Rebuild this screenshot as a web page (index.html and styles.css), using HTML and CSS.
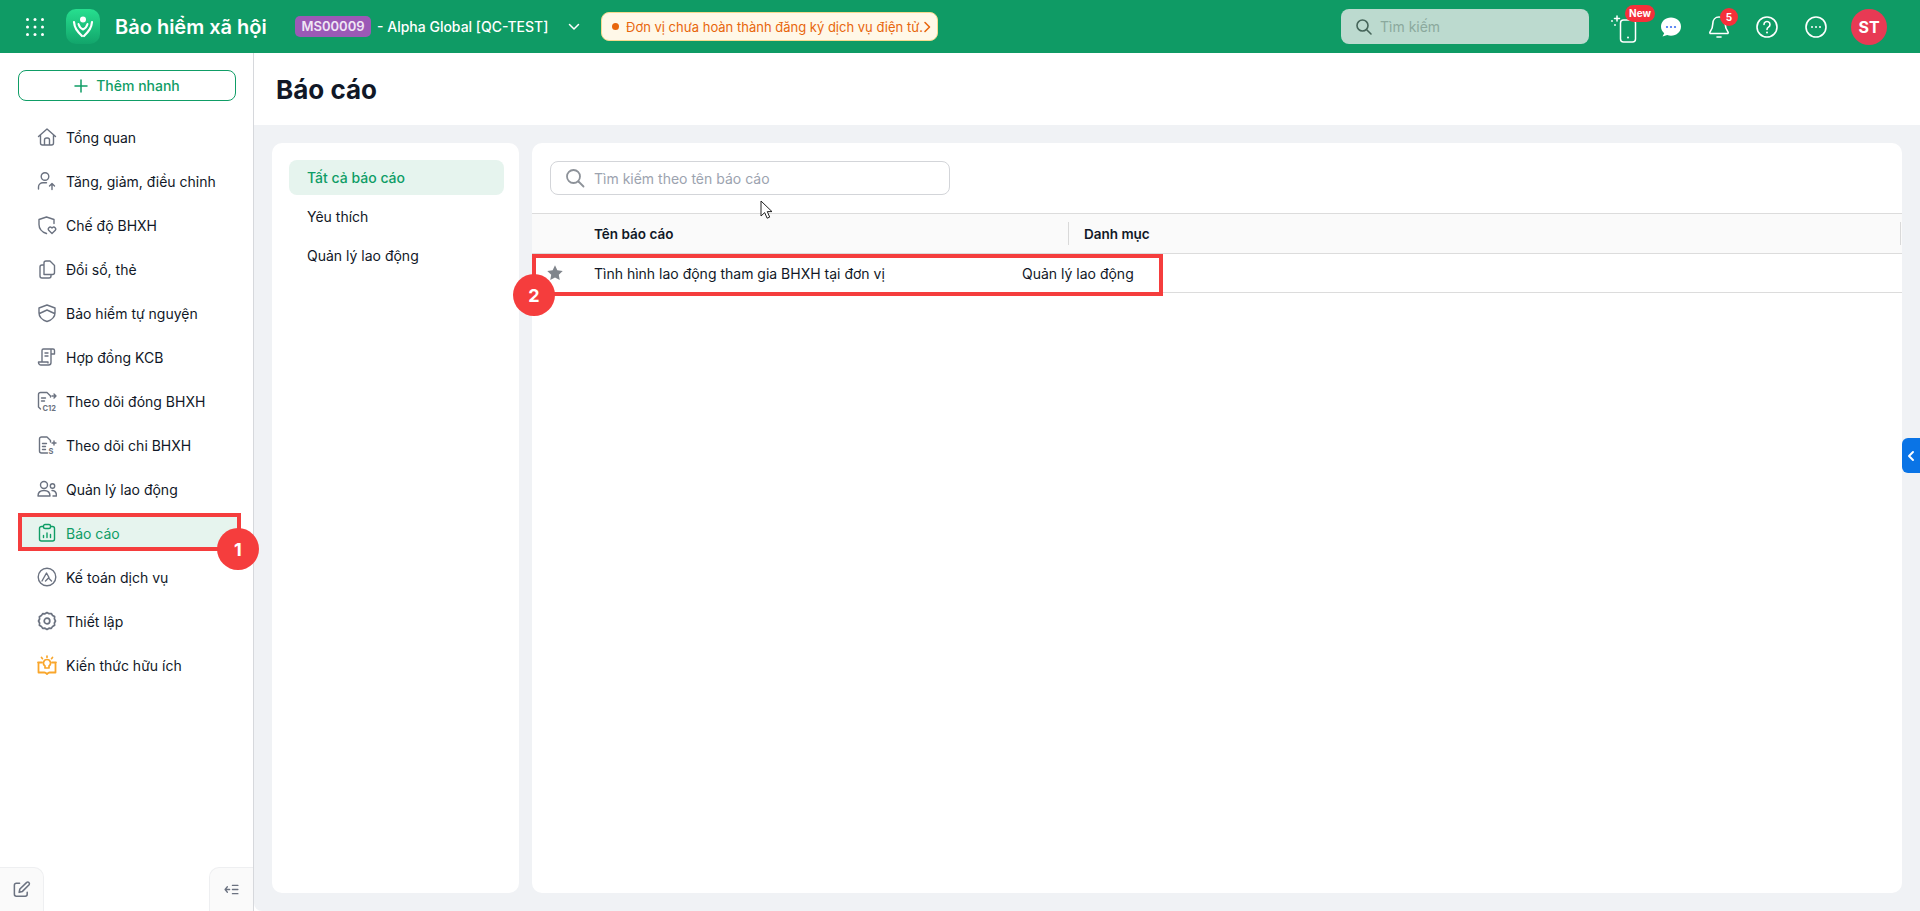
FILE: index.html
```html
<!DOCTYPE html>
<html lang="vi">
<head>
<meta charset="utf-8">
<title>Báo cáo</title>
<link rel="stylesheet" href="styles.css">
</head>
<body>
<header class="topbar">
  <svg class="apps" viewBox="0 0 20 20" fill="#fff"><circle cx="2.5" cy="2.5" r="1.5"/><circle cx="10" cy="2.5" r="1.5"/><circle cx="17.5" cy="2.5" r="1.5"/><circle cx="2.5" cy="10" r="1.5"/><circle cx="10" cy="10" r="1.5"/><circle cx="17.5" cy="10" r="1.5"/><circle cx="2.5" cy="17.5" r="1.5"/><circle cx="10" cy="17.5" r="1.5"/><circle cx="17.5" cy="17.5" r="1.5"/></svg>
  <div class="logo">
    <svg viewBox="0 0 34 36" width="34" height="36" fill="none" stroke="#fff" stroke-linecap="round" stroke-linejoin="round"><circle cx="17" cy="10.500" r="3" fill="#fff" stroke="none"/><path d="M8 13c.5 6 3 9 8 14" stroke-width="2.200"/><path d="M26 13c-.5 6-3 9-8 14" stroke-width="2.200"/><path d="M12.500 15c.8 3 2.500 4.500 4.500 5.500 2-1 3.700-2.500 4.500-5.500" stroke-width="2"/></svg>
  </div>
  <div class="app-name">Bảo hiểm xã hội</div>
  <span class="org-code">MS00009</span>
  <span class="org-name">- Alpha Global [QC-TEST]</span>
  <svg class="org-caret" viewBox="0 0 12 8" fill="none" stroke="#fff" stroke-width="1.500" stroke-linecap="round" stroke-linejoin="round"><path d="M1.500 1.500 6 6l4.500-4.500"/></svg>
  <div class="notice">
    <span class="notice-dot"></span>
    <span class="notice-text">Đơn vị chưa hoàn thành đăng ký dịch vụ điện tử.</span>
    <svg class="notice-arrow" viewBox="0 0 8 12" fill="none" stroke="#e8660c" stroke-width="1.600" stroke-linecap="round" stroke-linejoin="round"><path d="M2 1.500 6.500 6 2 10.500"/></svg>
  </div>
  <div class="top-search">
    <svg viewBox="0 0 18 18" width="18" height="18" fill="none" stroke="#46655a" stroke-width="1.600" stroke-linecap="round"><circle cx="7.500" cy="7.500" r="5.500"/><path d="m11.700 11.700 4.300 4.300"/></svg>
    <span>Tìm kiếm</span>
  </div>
  <div class="top-icons">
    <div class="ti ti-phone">
      <svg viewBox="0 0 28 32" width="28" height="32" fill="none" stroke="#fff" stroke-width="1.500" stroke-linecap="round"><rect x="10.500" y="10" width="15" height="22" rx="3" transform="translate(0 -1)"/><path d="M18 26.500h.01" stroke-width="2"/><path d="M7 5v5M4.500 7.500h5" /><path d="M2 10h.01M5 14h.01" stroke-width="1.800"/></svg>
      <span class="badge badge-new">New</span>
    </div>
    <div class="ti ti-chat">
      <svg viewBox="0 0 24 24" width="24" height="24"><path d="M12 2.500c-5.600 0-10 3.900-10 9 0 2.700 1.200 5 3.200 6.700l-1.700 3.300 4.700-1.400c1.200.4 2.500.6 3.800.6 5.600 0 10-3.900 10-9.200s-4.400-9-10-9z" fill="#fff"/><circle cx="8" cy="12" r="1.100" fill="#3d6ff2"/><circle cx="12" cy="12" r="1.100" fill="#3d6ff2"/><circle cx="16" cy="12" r="1.100" fill="#3d6ff2"/></svg>
    </div>
    <div class="ti ti-bell">
      <svg viewBox="0 0 24 26" width="24" height="26" fill="none" stroke="#fff" stroke-width="1.600" stroke-linecap="round" stroke-linejoin="round"><path d="M12 3c-3.800 0-6.200 3-6.200 6.700 0 4-1 6-2.800 8.300-.5.700 0 1.500.8 1.500h16.400c.8 0 1.300-.8.800-1.500-1.800-2.300-2.800-4.300-2.800-8.300C18.200 6 15.800 3 12 3z"/><path d="M10 23h4"/></svg>
      <span class="badge badge-count">5</span>
    </div>
    <div class="ti ti-help">
      <svg viewBox="0 0 24 24" width="24" height="24" fill="none" stroke="#fff" stroke-width="1.600" stroke-linecap="round"><circle cx="12" cy="12" r="10"/><path d="M9 9.500a3 3 0 1 1 4.500 2.600c-1 .6-1.500 1.200-1.500 2.400"/><path d="M12 17.500h.01" stroke-width="2"/></svg>
    </div>
    <div class="ti ti-more">
      <svg viewBox="0 0 24 24" width="24" height="24" fill="none" stroke="#fff" stroke-width="1.600" stroke-linecap="round"><circle cx="12" cy="12" r="10"/><path d="M8 12h.01M12 12h.01M16 12h.01" stroke-width="2"/></svg>
    </div>
    <div class="avatar">ST</div>
  </div>
</header>

<div class="shell">
  <aside class="sidebar">
    <button class="quick-add">
      <svg viewBox="0 0 14 14" width="14" height="14" fill="none" stroke="#0f9d66" stroke-width="1.500" stroke-linecap="round"><path d="M7 1v12M1 7h12"/></svg>
      <span>Thêm nhanh</span>
    </button>
    <nav class="nav">
      <a class="nav-item"><svg class="nav-icon" viewBox="0 0 20 20"><path d="M1.500 9.500 10 2l8.500 7.500M3.500 8v8a2 2 0 0 0 2 2h9a2 2 0 0 0 2-2V8M7.500 18v-5a2 2 0 0 1 2-2h1a2 2 0 0 1 2 2v5"/></svg><span>Tổng quan</span></a>
      <a class="nav-item"><svg class="nav-icon" viewBox="0 0 20 20"><circle cx="8" cy="5.500" r="3.800"/><path d="M1.500 18v-2c0-2.500 2-4.300 4.500-4.300h3.500M15 18.500v-6M12.500 15l2.500-2.500 2.500 2.500"/></svg><span>Tăng, giảm, điều chỉnh</span></a>
      <a class="nav-item"><svg class="nav-icon" viewBox="0 0 20 20"><path d="M9.500 18.500C5 17 2 14 2 9.500V4.500l7.500-2.500L17 4.500v4M15 18.500l-3.300-3.200a2 2 0 0 1 2.800-2.800l.5.500.5-.5a2 2 0 0 1 2.800 2.800z"/></svg><span>Chế độ BHXH</span></a>
      <a class="nav-item"><svg class="nav-icon" viewBox="0 0 20 20"><path d="M7 15.500V4a2 2 0 0 1 2-2h4l4.500 4.500V13.500a2 2 0 0 1-2 2zM7 6H5a2 2 0 0 0-2 2v9a2 2 0 0 0 2 2h7a2 2 0 0 0 2-2v-1.500"/></svg><span>Đổi sổ, thẻ</span></a>
      <a class="nav-item"><svg class="nav-icon" viewBox="0 0 20 20"><path d="M10 2 2 5v5c0 4 3.500 7 8 8.500 4.500-1.500 8-4.500 8-8.500V5zM2.500 10.500 10 7l7.500 3.500"/></svg><span>Bảo hiểm tự nguyện</span></a>
      <a class="nav-item"><svg class="nav-icon" viewBox="0 0 20 20"><path d="M5 15V3.500A1.500 1.500 0 0 1 6.500 2H16a1.500 1.500 0 0 1 1.500 1.500V7h-3.500M14 3v12.500a2.500 2.500 0 0 1-2.500 2.500H4a2.500 2.500 0 0 1-2.500-2.500V15H11v1M8 6h3M8 9h3"/></svg><span>Hợp đồng KCB</span></a>
      <a class="nav-item"><svg class="nav-icon" viewBox="0 0 20 20"><path d="M10 1.500H3.500a2 2 0 0 0-2 2V16l2 2M10 1.500 13.500 5v1M4.500 7h4M4.500 10h3M15 5h4M17 3l2 2-2 2"/><text class="icon-text" x="5.500" y="19.500">C12</text></svg><span>Theo dõi đóng BHXH</span></a>
      <a class="nav-item"><svg class="nav-icon" viewBox="0 0 20 20"><path d="M10 2H4.500a2 2 0 0 0-2 2v12a2 2 0 0 0 2 2h6M10 2l3.500 3.500V7M5.500 8.500h4M5.500 11.500h3M5.500 14.500h3M15 8h4M17 6v4"/><text class="icon-text" x="11.500" y="19">S</text></svg><span>Theo dõi chi BHXH</span></a>
      <a class="nav-item"><svg class="nav-icon" viewBox="0 0 20 20"><circle cx="7" cy="6" r="3.500"/><circle cx="15.500" cy="7" r="2.200"/><path d="M1 17c0-3.500 2.500-5.500 6-5.500s6 2 6 5.500zM15 11.500c2.500 0 4.500 1.500 4.500 5.500H16"/></svg><span>Quản lý lao động</span></a>
      <a class="nav-item active"><svg class="nav-icon" viewBox="0 0 20 20"><path d="M6 3.500H4.500a2 2 0 0 0-2 2V16a2 2 0 0 0 2 2h11a2 2 0 0 0 2-2V5.500a2 2 0 0 0-2-2H14"/><rect x="6.500" y="1.500" width="7" height="4" rx="1.500"/><path d="M6.500 14.500v-2M10 14.500v-4.500M13.500 14.500v-3"/></svg><span>Báo cáo</span></a>
      <a class="nav-item"><svg class="nav-icon" viewBox="0 0 20 20"><circle cx="10" cy="10" r="8.800"/><path d="M5 14 9.500 6l2.500 4.500M8.500 14l3-3 3 3"/></svg><span>Kế toán dịch vụ</span></a>
      <a class="nav-item"><svg class="nav-icon" viewBox="0 0 20 20"><path d="m10 1.500 2 1.200 2.300-.2 1.300 2 2 1.100-.2 2.300L18.500 10l-1.100 2 .2 2.300-2 1.100-1.300 2-2.300-.2-2 1.300-2-1.300-2.300.2-1.300-2-2-1.100.2-2.300L1.500 10l1.100-2-.2-2.300 2-1.100 1.300-2 2.300.2z" stroke-width="1.700"/><circle cx="10" cy="10" r="2.800" stroke-width="1.700"/></svg><span>Thiết lập</span></a>
      <a class="nav-item"><svg class="nav-icon orange" viewBox="0 0 20 20"><path d="M1 7.500h4M19 7.500h-4M1.500 7.500V17.500h6c1 0 1.500.5 2.500 1.500 1-1 1.500-1.500 2.500-1.500h6V7.500" stroke-width="1.800"/><path d="M10 4.500a3.500 3.500 0 0 0-2 6.400V13h4v-2.100a3.500 3.500 0 0 0-2-6.400z" stroke-width="1.700"/><path d="M10 1v1.200M4.500 2.500l1 1.200M15.500 2.500l-1 1.200" stroke-width="1.700"/></svg><span>Kiến thức hữu ích</span></a>
    </nav>
    <div class="side-foot">
      <button class="foot-btn foot-left">
        <svg viewBox="0 0 20 20" width="19" height="19" fill="none" stroke="#6b7280" stroke-width="1.600" stroke-linecap="round" stroke-linejoin="round"><path d="M8 3.500H4.500a2 2 0 0 0-2 2V15a2 2 0 0 0 2 2H14a2 2 0 0 0 2-2v-2"/><path d="M15.500 2.500a1.800 1.800 0 0 1 2.500 2.500L11 12l-3.500 1 .8-3.500z"/></svg>
      </button>
      <button class="foot-btn foot-right">
        <svg viewBox="0 0 16 12" width="15" height="11" fill="none" stroke="#6b7280" stroke-width="1.400" stroke-linecap="round" stroke-linejoin="round"><path d="M6 6H1M3.500 3 1 6l2.500 3M9 1.500h6M9 6h6M9 10.500h6"/></svg>
      </button>
    </div>
  </aside>

  <main class="main">
    <div class="page-title">Báo cáo</div>
    <div class="content">
      <section class="card cats">
        <div class="cat active">Tất cả báo cáo</div>
        <div class="cat">Yêu thích</div>
        <div class="cat">Quản lý lao động</div>
      </section>
      <section class="card reports">
        <div class="search-row">
          <div class="report-search">
            <svg viewBox="0 0 20 20" width="20" height="20" fill="none" stroke="#8d9299" stroke-width="1.800" stroke-linecap="round"><circle cx="8.500" cy="8.500" r="6.500"/><path d="m13.500 13.500 5 5"/></svg>
            <span>Tìm kiếm theo tên báo cáo</span>
          </div>
        </div>
        <div class="thead">
          <div class="th col-name">Tên báo cáo</div>
          <div class="th col-cat">Danh mục</div>
          <div class="th-rest"></div>
        </div>
        <div class="trow">
          <svg class="star" viewBox="0 0 20 20" width="18" height="18" fill="#80858c"><path d="m10 1.500 2.600 5.500 6 .8-4.400 4.100 1.100 6L10 15l-5.300 2.900 1.100-6L1.400 7.800l6-.8z"/></svg>
          <div class="td-name">Tình hình lao động tham gia BHXH tại đơn vị</div>
          <div class="td-cat">Quản lý lao động</div>
        </div>
      </section>
    </div>
  </main>
</div>

<div class="mark mark-one"></div>
<div class="step step-one">1</div>
<div class="mark mark-two"></div>
<div class="step step-two">2</div>
<div class="side-tab">
  <svg viewBox="0 0 10 14" width="8" height="12" fill="none" stroke="#fff" stroke-width="2.400" stroke-linecap="round" stroke-linejoin="round"><path d="M7.500 2 2.500 7l5 5"/></svg>
</div>
<svg class="cursor" viewBox="0 0 13 20" width="13" height="20"><path d="M1 1v15l3.700-3.400 2.400 5.600 2.600-1.100-2.400-5.500H12z" fill="#fff" stroke="#222" stroke-width="1"/></svg>
</body>
</html>
```
FILE: styles.css
```css
* { box-sizing: border-box; }
html, body { margin: 0; height: 911px; overflow: hidden; }
body { font-family: Inter, "Noto Sans", sans-serif; font-size: 14px; color: #111827; background: #fff; position: relative; }

.topbar { height: 53px; background: #0f9b65; display: flex; align-items: center; color: #fff; }
.apps { width: 20px; height: 20px; margin-left: 25px; flex: none; }
.logo { width: 34px; height: 35px; margin-left: 21px; border-radius: 10px; background: linear-gradient(180deg, #27df8f, #12a56b); display: flex; align-items: center; justify-content: center; flex: none; }
.app-name { margin-left: 15px; width: 165px; font-size: 20px; font-weight: 600; white-space: nowrap; }
.org-code { margin-left: 15px; width: 76px; height: 21px; border-radius: 5px; background: #9b59b6; font-size: 13px; font-weight: 600; color: #f0e6f5; text-align: center; line-height: 21px; }
.org-name { margin-left: 6px; font-size: 14px; font-weight: 500; white-space: nowrap; width: 186px; }
.org-caret { width: 12px; height: 8px; margin-left: 5px; flex: none; }
.notice { margin-left: 21px; width: 337px; height: 29px; background: #fff8e8; border: 1px solid #f6d98f; border-radius: 8px; display: flex; align-items: center; padding-left: 10px; color: #e8660c; font-size: 13px; flex: none; }
.notice-dot { width: 7px; height: 7px; border-radius: 50%; background: #e8660c; flex: none; }
.notice-text { margin-left: 7px; white-space: nowrap; }
.notice-arrow { width: 8px; height: 12px; margin-left: auto; margin-right: 14px; flex: none; }
.top-search { margin-left: 403px; width: 248px; height: 35px; border-radius: 8px; background: #bcdacf; display: flex; align-items: center; gap: 7px; padding-left: 14px; color: #8ba99d; font-size: 14px; flex: none; }
.top-icons { flex: 1; display: flex; align-items: center; height: 53px; position: relative; }
.ti { position: relative; display: flex; align-items: center; justify-content: center; flex: none; }
.ti-phone { margin-left: 21px; width: 28px; height: 32px; }
.ti-chat { margin-left: 21px; width: 24px; }
.ti-bell { margin-left: 24px; width: 24px; }
.ti-help { margin-left: 24px; width: 24px; }
.ti-more { margin-left: 25px; width: 24px; }
.avatar { margin-left: 23px; width: 36px; height: 36px; border-radius: 50%; background: #e83a54; color: #fff; font-weight: 700; font-size: 16px; display: flex; align-items: center; justify-content: center; flex: none; }
.badge { position: absolute; background: #f5303a; color: #fff; font-weight: 700; font-size: 10px; display: flex; align-items: center; justify-content: center; border-radius: 9px; }
.badge-new { left: 15px; top: -6px; width: 30px; height: 17px; }
.badge-count { left: 13px; top: -6px; width: 18px; height: 18px; }

.shell { display: flex; height: 858px; }
.sidebar { width: 254px; flex: none; border-right: 1px solid #d6d8dc; display: flex; flex-direction: column; background: #fff; }
.quick-add { margin: 17px 17px 0 18px; height: 31px; border: 1px solid #0f9d66; border-radius: 8px; background: #fff; color: #0f9d66; font: 500 14px Inter, sans-serif; display: flex; align-items: center; justify-content: center; gap: 8px; padding: 0; }
.nav { margin-top: 18px; padding: 0 16px 0 22px; display: flex; flex-direction: column; gap: 8px; }
.nav-item { height: 36px; display: flex; align-items: center; gap: 9px; padding-left: 15px; border-radius: 4px; color: #111827; white-space: nowrap; }
.nav-item.active { background: #e6f4ee; color: #0f9d66; }
.nav-icon { width: 20px; height: 20px; flex: none; fill: none; stroke: #6b7280; stroke-width: 1.400; stroke-linecap: round; stroke-linejoin: round; }
.active .nav-icon { stroke: #0f9d66; }
.nav-icon.orange { stroke: #f9a62b; }
.icon-text { font: 700 7.500px Inter, sans-serif; fill: #6b7280; stroke: none; }
.side-foot { margin-top: auto; display: flex; justify-content: space-between; }
.foot-btn { width: 44px; height: 44px; background: #fafafa; border: 1px solid #eeeff1; border-bottom: 0; padding: 0; display: flex; align-items: center; justify-content: center; }
.foot-left { border-left: 0; border-top-right-radius: 10px; }
.foot-right { border-right: 0; border-top-left-radius: 10px; }

.main { flex: 1; min-width: 0; display: flex; flex-direction: column; }
.page-title { height: 72px; padding-left: 22px; display: flex; align-items: center; font-size: 26px; font-weight: 700; color: #111827; background: #fff; }
.content { flex: 1; background: #f0f2f5; padding: 18px; display: flex; gap: 13px; border-bottom-left-radius: 8px; }
.card { background: #fff; border-radius: 10px; }
.cats { width: 247px; flex: none; padding: 17px 15px 0 17px; display: flex; flex-direction: column; gap: 4px; }
.cat { height: 35px; padding-left: 18px; border-radius: 8px; display: flex; align-items: center; font-size: 14px; }
.cat.active { background: #e6f4ee; color: #0f9d66; font-weight: 500; }
.reports { flex: 1; min-width: 0; display: flex; flex-direction: column; }
.search-row { padding: 18px; height: 70px; }
.report-search { width: 400px; height: 34px; border: 1px solid #d3d5d9; border-radius: 8px; display: flex; align-items: center; gap: 9px; padding-left: 14px; color: #9ca3af; }
.thead { height: 41px; border-top: 1px solid #dcdcdc; border-bottom: 1px solid #dcdcdc; background: #fafafa; display: flex; align-items: center; font-weight: 600; font-size: 13.500px; }
.th { height: 23px; display: flex; align-items: center; }
.col-name { width: 475px; margin-left: 62px; border-right: 1px solid #d9d9d9; }
.col-cat { margin-left: 15px; flex: 1; }
.th-rest { width: 1px; height: 23px; background: #d9d9d9; margin-right: 1px; }
.trow { height: 39px; border-bottom: 1px solid #dcdcdc; display: flex; align-items: center; }
.star { margin-left: 14px; flex: none; }
.td-name { margin-left: 30px; width: 428px; white-space: nowrap; }
.td-cat { margin-left: 0; white-space: nowrap; }

.mark { position: absolute; border: 4px solid #f53d3d; }
.mark-one { left: 18px; top: 513px; width: 223px; height: 38px; }
.mark-two { left: 532px; top: 254px; width: 631px; height: 42px; }
.step { position: absolute; width: 42px; height: 42px; border-radius: 50%; background: #f53d3d; color: #fff; font-weight: 700; font-size: 18px; display: flex; align-items: center; justify-content: center; }
.step-one { left: 217px; top: 528px; }
.step-two { left: 513px; top: 274px; }
.side-tab { position: absolute; left: 1902px; top: 438px; width: 18px; height: 35px; background: #0a74e6; border-radius: 6px 0 0 6px; display: flex; align-items: center; justify-content: center; }
.cursor { position: absolute; left: 760px; top: 200px; }
```
